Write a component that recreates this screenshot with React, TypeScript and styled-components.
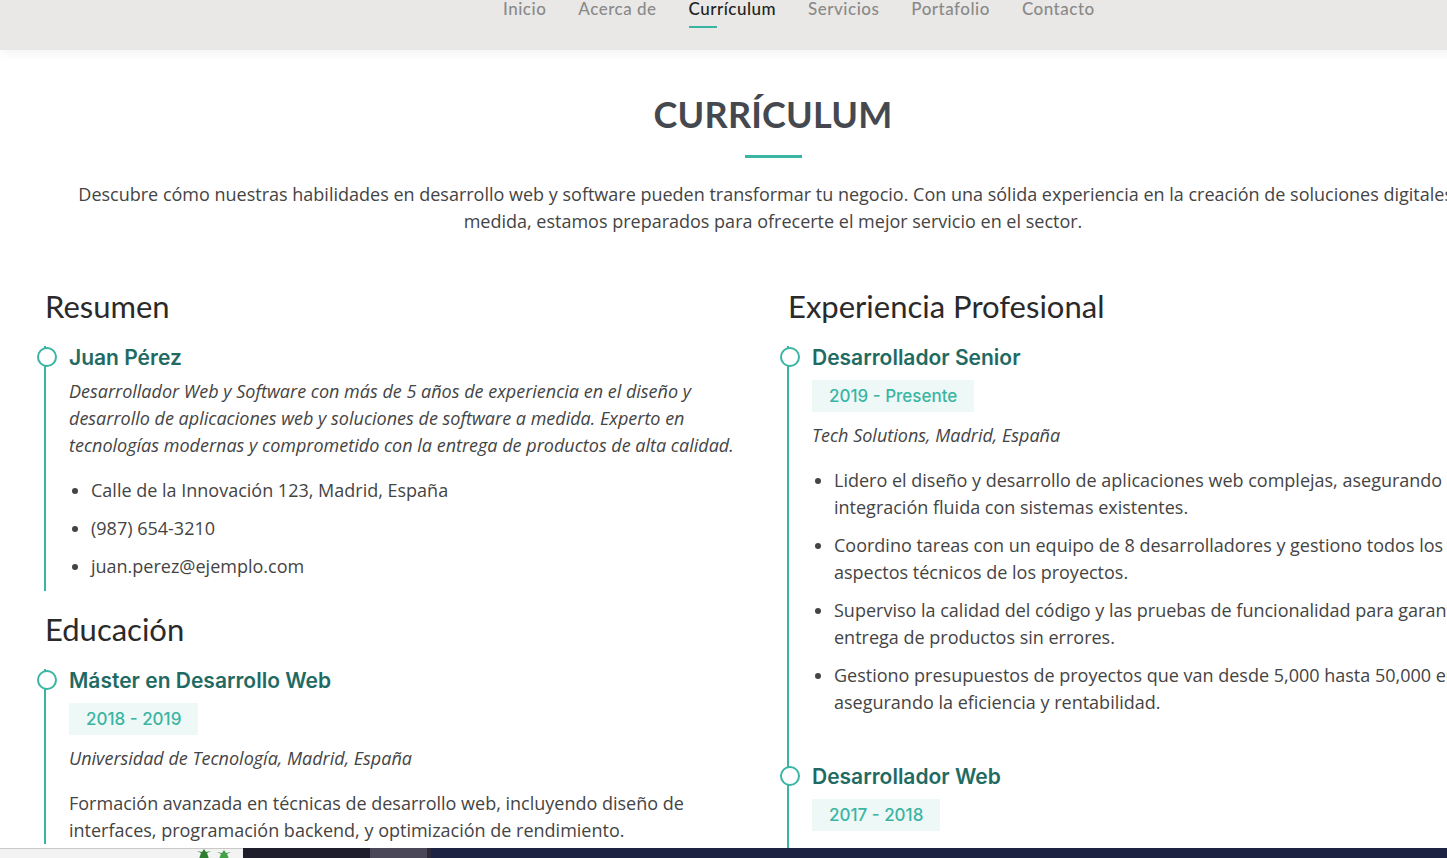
import styled, { createGlobalStyle } from 'styled-components'

const accent = '#3ab5a3'
const titleTeal = '#1f6b63'
const text = '#444444'

const GlobalStyle = createGlobalStyle`
  html, body {
    margin: 0;
    padding: 0;
    overflow: hidden;
    background: #fff;
  }
  body {
    font-family: "Open Sans", "DejaVu Sans", sans-serif;
    color: ${text};
    height: 858px;
  }
  * { box-sizing: border-box; }
`

const Page = styled.div`
  width: 1546px;
`

const TopBar = styled.header`
  height: 50px;
  display: flex;
  align-items: flex-start;
  background: #e9e8e6;
  box-shadow: 0 3px 10px rgba(0, 0, 0, 0.05);
  position: relative;
  z-index: 2;
`

const Nav = styled.nav`
  display: flex;
  gap: 32px;
  padding-left: 503px;
  margin-top: -6px;
`

const NavLink = styled.a<{ $active?: boolean }>`
  font-family: "Lato", "Open Sans", sans-serif;
  font-size: 17px;
  font-weight: 500;
  letter-spacing: 0.5px;
  line-height: 30px;
  color: ${({ $active }) => ($active ? '#222' : '#8a8a8a')};
  text-decoration: none;
  position: relative;
  &::after {
    content: "";
    display: ${({ $active }) => ($active ? 'block' : 'none')};
    position: absolute;
    left: 0;
    top: 32px;
    width: 28px;
    height: 2px;
    background: ${accent};
  }
`

const Intro = styled.section`
  text-align: center;
  padding: 42px 60px 0;
`

const SectionTitle = styled.h2`
  margin: 0;
  font-family: "Lato", "Open Sans", sans-serif;
  font-size: 36px;
  font-weight: 700;
  line-height: 44px;
  color: #45494f;
  letter-spacing: 0.2px;
  &::after {
    content: "";
    display: block;
    width: 57px;
    height: 3px;
    background: ${accent};
    margin: 19px auto 0;
  }
`

const Lead = styled.p`
  margin: 23px 0 0;
  font-size: 18px;
  line-height: 27px;
  color: ${text};
`

const Columns = styled.div`
  display: grid;
  grid-template-columns: 713px 728px;
  column-gap: 30px;
  padding: 53px 0 0 45px;
`

const Column = styled.div``

const ResumeTitle = styled.h3`
  margin: 0 0 22px;
  font-family: "Lato", "Open Sans", sans-serif;
  font-size: 31px;
  font-weight: 400;
  line-height: 36px;
  color: #2a2a2a;
`

const Group = styled.div`
  & + ${ResumeTitle} {
    margin-top: 20px;
  }
`

const Item = styled.div<{ $gap?: number }>`
  position: relative;
  border-left: 2px solid ${accent};
  padding: 0 0 ${({ $gap = 0 }) => $gap}px 23px;
  margin-left: -1px;
  &::before {
    content: "";
    position: absolute;
    left: -9px;
    top: 1px;
    width: 16px;
    height: 16px;
    border-radius: 50%;
    background: #fff;
    border: 2px solid ${accent};
  }
`

const ItemTitle = styled.h4`
  margin: 0;
  padding-top: 2px;
  font-family: "Inter", "Open Sans", sans-serif;
  font-size: 21px;
  font-weight: 600;
  line-height: 20px;
  color: ${titleTeal};
`

const Period = styled.h5`
  display: inline-block;
  margin: 12px 0 0;
  padding: 5px 17px;
  background: #eef9f7;
  font-family: "Inter", "Open Sans", sans-serif;
  font-size: 17px;
  font-weight: 500;
  line-height: 22px;
  color: ${accent};
`

const Em = styled.p`
  margin: 10px 0 0;
  font-style: italic;
  font-size: 18px;
  line-height: 27px;
`

const Body = styled.p`
  margin: 18px 0 0;
  font-size: 18px;
  line-height: 27px;
`

const List = styled.ul`
  margin: 18px 0 0;
  padding-left: 22px;
  li {
    font-size: 18px;
    line-height: 27px;
    padding-bottom: 11px;
  }
`

const Taskbar = styled.footer`
  position: fixed;
  left: 0;
  right: 0;
  bottom: 0;
  height: 10px;
  display: flex;
  z-index: 5;
`

const TrayPart = styled.div<{ $w?: number; $bg: string; $edge?: boolean }>`
  flex: ${({ $w }) => ($w ? `0 0 ${$w}px` : '1')};
  background: ${({ $bg }) => $bg};
  border-top: ${({ $edge }) => ($edge ? '1px solid #c9c9c9' : 'none')};
  position: relative;
  overflow: hidden;
`

const Plants = styled.svg`
  position: absolute;
  left: 195px;
  top: 0;
`

export default function App() {
  return (
    <>
      <GlobalStyle />
      <Page>
        <TopBar>
          <Nav>
            <NavLink href="#">Inicio</NavLink>
            <NavLink href="#">Acerca de</NavLink>
            <NavLink href="#" $active>Currículum</NavLink>
            <NavLink href="#">Servicios</NavLink>
            <NavLink href="#">Portafolio</NavLink>
            <NavLink href="#">Contacto</NavLink>
          </Nav>
        </TopBar>

        <Intro>
          <SectionTitle>CURRÍCULUM</SectionTitle>
          <Lead>
            Descubre cómo nuestras habilidades en desarrollo web y software pueden transformar tu negocio. Con una
            sólida experiencia en la creación de soluciones digitales a medida, estamos preparados para ofrecerte el
            mejor servicio en el sector.
          </Lead>
        </Intro>

        <Columns>
          <Column>
            <ResumeTitle>Resumen</ResumeTitle>
            <Group>
              <Item>
                <ItemTitle>Juan Pérez</ItemTitle>
                <Em>
                  Desarrollador Web y Software con más de 5 años de experiencia en el diseño y desarrollo de
                  aplicaciones web y soluciones de software a medida. Experto en tecnologías modernas y comprometido
                  con la entrega de productos de alta calidad.
                </Em>
                <List>
                  <li>Calle de la Innovación 123, Madrid, España</li>
                  <li>(987) 654-3210</li>
                  <li>juan.perez@ejemplo.com</li>
                </List>
              </Item>
            </Group>
            <ResumeTitle>Educación</ResumeTitle>
            <Group>
              <Item>
                <ItemTitle>Máster en Desarrollo Web</ItemTitle>
                <Period>2018 - 2019</Period>
                <Em>Universidad de Tecnología, Madrid, España</Em>
                <Body>
                  Formación avanzada en técnicas de desarrollo web, incluyendo diseño de interfaces, programación
                  backend, y optimización de rendimiento.
                </Body>
              </Item>
            </Group>
          </Column>

          <Column>
            <ResumeTitle>Experiencia Profesional</ResumeTitle>
            <Group>
              <Item $gap={38}>
                <ItemTitle>Desarrollador Senior</ItemTitle>
                <Period>2019 - Presente</Period>
                <Em>Tech Solutions, Madrid, España</Em>
                <List>
                  <li>
                    Lidero el diseño y desarrollo de aplicaciones web complejas, asegurando una integración fluida con
                    sistemas existentes.
                  </li>
                  <li>
                    Coordino tareas con un equipo de 8 desarrolladores y gestiono todos los aspectos técnicos de los
                    proyectos.
                  </li>
                  <li>
                    Superviso la calidad del código y las pruebas de funcionalidad para garantizar la entrega de
                    productos sin errores.
                  </li>
                  <li>
                    Gestiono presupuestos de proyectos que van desde 5,000 hasta 50,000 euros, asegurando la
                    eficiencia y rentabilidad.
                  </li>
                </List>
              </Item>
              <Item $gap={40}>
                <ItemTitle>Desarrollador Web</ItemTitle>
                <Period>2017 - 2018</Period>
              </Item>
            </Group>
          </Column>
        </Columns>
      </Page>

      <Taskbar>
        <TrayPart $w={243} $bg="#f3f3f3" $edge>
          <Plants width="48" height="10" viewBox="0 0 48 10">
            <path d="M4 10 L6 4 L2 2 L7 3 L9 0 L11 3 L16 2 L12 4 L14 10 Z" fill="#2e7d32" />
            <path d="M24 10 L26 5 L22 3 L27 4 L29 1 L31 4 L36 3 L32 5 L34 10 Z" fill="#43a047" />
          </Plants>
        </TrayPart>
        <TrayPart $w={127} $bg="#1f1e2c" />
        <TrayPart $w={57} $bg="#4a4858" />
        <TrayPart $w={4} $bg="#2a2a38" />
        <TrayPart $bg="#1d2443" />
      </Taskbar>
    </>
  )
}
